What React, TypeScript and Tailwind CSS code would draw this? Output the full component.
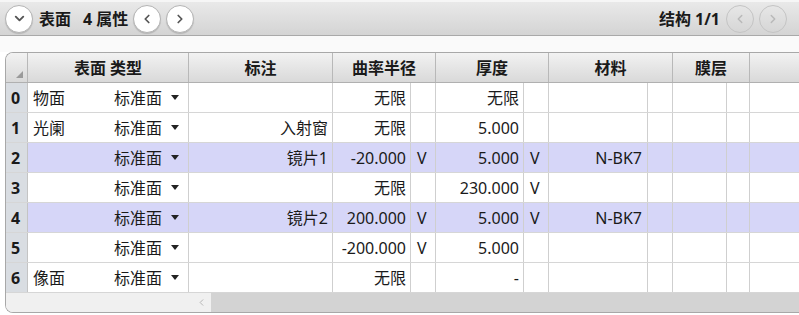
import { ChevronDown, ChevronLeft, ChevronRight } from 'lucide-react';

const font = { fontFamily: '"Noto Sans", "Noto Sans CJK SC", sans-serif' };

const cols = 'grid grid-cols-[22px_161px_144px_78px_25px_88px_25px_99px_25px_54px_23px_50px]';

type Row = {
  name?: string;
  note?: string;
  radius: string;
  rv?: boolean;
  thick: string;
  tv?: boolean;
  mat?: string;
  hl?: boolean;
};

const rows: Row[] = [
  { name: '物面', radius: '无限', thick: '无限' },
  { name: '光阑', note: '入射窗', radius: '无限', thick: '5.000' },
  { note: '镜片1', radius: '-20.000', rv: true, thick: '5.000', tv: true, mat: 'N-BK7', hl: true },
  { radius: '无限', thick: '230.000', tv: true },
  { note: '镜片2', radius: '200.000', rv: true, thick: '5.000', tv: true, mat: 'N-BK7', hl: true },
  { radius: '-200.000', rv: true, thick: '5.000' },
  { name: '像面', radius: '无限', thick: '-' },
];

function RoundButton({ children, disabled }: { children: React.ReactNode; disabled?: boolean }) {
  return (
    <div
      className={
        disabled
          ? 'grid h-[28px] w-[28px] place-items-center rounded-full border border-[#c4c4c4] text-[#b8b8b8]'
          : 'grid h-[28px] w-[28px] place-items-center rounded-full border border-[#b4b4b4] bg-white text-[#555] shadow-[0_1px_1px_rgba(0,0,0,0.15)]'
      }
    >
      {children}
    </div>
  );
}

const cell = 'flex items-center border-r border-[#cfcfcf] h-full';

export default function App() {
  return (
    <div className="h-[315px] w-[799px] overflow-hidden bg-white text-[16px] text-[#1a1a1a]" style={font}>
      <div className="flex h-[36px] items-center border-b border-[#a9a9a9] border-t-2 border-t-[#f6f6f6] bg-gradient-to-b from-[#e9e9e9] to-[#d4d4d4] pl-[5px] pr-[12px]">
        <RoundButton>
          <ChevronDown size={15} strokeWidth={3} />
        </RoundButton>
        <span className="ml-[6px] font-bold">表面</span>
        <span className="ml-[12px] font-bold">4 属性</span>
        <div className="ml-[5px] flex gap-[5px]">
          <RoundButton>
            <ChevronLeft size={14} strokeWidth={3} />
          </RoundButton>
          <RoundButton>
            <ChevronRight size={14} strokeWidth={3} />
          </RoundButton>
        </div>
        <span className="ml-auto font-bold">结构 1/1</span>
        <div className="ml-[6px] flex gap-[5px]">
          <RoundButton disabled>
            <ChevronLeft size={14} strokeWidth={2.5} />
          </RoundButton>
          <RoundButton disabled>
            <ChevronRight size={14} strokeWidth={2.5} />
          </RoundButton>
        </div>
      </div>
      <div className="h-[16px] bg-[#fafafa]" />
      <div className="ml-[5px] w-[810px] overflow-hidden rounded-l-[8px] border-y border-l border-[#a8a8a8]">
        <div className={`${cols} h-[30px] bg-gradient-to-b from-[#f2f2f2] to-[#d9d9d9] font-bold border-b border-[#b0b0b0]`}>
          <div className="relative border-r border-[#b8b8b8]">
            <span className="absolute bottom-[4px] right-[4px] h-0 w-0 border-b-[7px] border-l-[7px] border-b-[#9a9a9a] border-l-transparent" />
          </div>
          <div className="flex items-center justify-center border-r border-[#b8b8b8]">表面 类型</div>
          <div className="flex items-center justify-center border-r border-[#b8b8b8]">标注</div>
          <div className="col-span-2 flex items-center justify-center border-r border-[#b8b8b8]">曲率半径</div>
          <div className="col-span-2 flex items-center justify-center border-r border-[#b8b8b8]">厚度</div>
          <div className="col-span-2 flex items-center justify-center border-r border-[#b8b8b8]">材料</div>
          <div className="col-span-2 flex items-center justify-center border-r border-[#b8b8b8]">膜层</div>
          <div />
        </div>
        {rows.map((r, i) => (
          <div
            key={i}
            className={`${cols} h-[30px] border-b border-[#d6d6d6] ${r.hl ? 'bg-[#d6d6f8]' : 'bg-white'}`}
          >
            <div className="flex items-center border-r border-[#c4c4c4] bg-[#d9dde2] pl-[5px] font-bold">{i}</div>
            <div className={`${cell} justify-between pl-[5px] pr-[9px]`}>
              <span>{r.name}</span>
              <span className="flex items-center gap-[9px]">
                标准面
                <span className="h-0 w-0 border-x-[4px] border-t-[5px] border-x-transparent border-t-[#222]" />
              </span>
            </div>
            <div className={`${cell} justify-end pr-[4px]`}>{r.note}</div>
            <div className={`${cell} justify-end pr-[4px]`}>{r.radius}</div>
            <div className={`${cell} pl-[6px]`}>{r.rv ? 'V' : ''}</div>
            <div className={`${cell} justify-end pr-[4px]`}>{r.thick}</div>
            <div className={`${cell} pl-[6px]`}>{r.tv ? 'V' : ''}</div>
            <div className={`${cell} justify-end pr-[5px]`}>{r.mat}</div>
            <div className={cell} />
            <div className={cell} />
            <div className={cell} />
            <div className={cell} />
          </div>
        ))}
        <div className="flex h-[19px]">
          <div className="flex w-[205px] items-center justify-end bg-[#f0f0f0] pr-[4px] text-[#b0b0b0]">
            <ChevronLeft size={11} strokeWidth={2} />
          </div>
          <div className="flex-1 bg-[#d3d3d3]" />
        </div>
      </div>
    </div>
  );
}
